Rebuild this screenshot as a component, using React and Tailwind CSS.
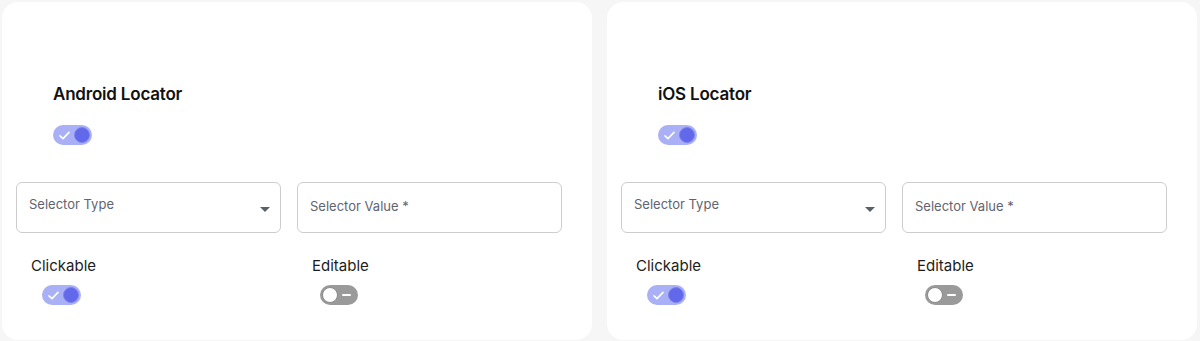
import React from "react";

function ToggleOn() {
  return (
    <div className="w-[39px] h-[20px] rounded-full bg-[#aab0f6] flex items-center justify-between pl-[6px] pr-[2px]">
      <svg width="11" height="9" viewBox="0 0 11 9" fill="none">
        <path d="M1 4.8 L4 7.6 L10 1.4" stroke="white" strokeWidth="1.6" strokeLinecap="round" strokeLinejoin="round" />
      </svg>
      <div className="w-[16px] h-[16px] rounded-full bg-[#6168ea] border border-[#7d83ee]" />
    </div>
  );
}

function ToggleOff() {
  return (
    <div className="w-[38px] h-[20px] rounded-full bg-[#9a9a9a] flex items-center justify-between pl-[2px] pr-[7px]">
      <div className="w-[16px] h-[16px] rounded-full bg-white border border-[#8a8a8a]" />
      <div className="w-[9px] h-[2px] bg-white rounded-full" />
    </div>
  );
}

function Card({ title }) {
  return (
    <div className="w-[590px] h-[338px] shrink-0 bg-white rounded-[16px] flex flex-col">
      <div className="pl-[51px] pt-[80px] flex flex-col">
        <div className="text-[17px] leading-[24px] font-semibold text-[#111111] tracking-[-0.2px]">{title}</div>
        <div className="mt-[19px]">
          <ToggleOn />
        </div>
      </div>
      <div className="mt-[37px] pl-[14px] flex gap-[16px]">
        <div className="w-[265px] h-[51px] rounded-[6px] border border-[#cdcdcd] relative">
          <div className="absolute left-[12px] top-[12px] text-[13px] leading-[18px] text-[#5f6470]">Selector Type</div>
          <svg className="absolute left-[243px] top-[24px]" width="10" height="5" viewBox="0 0 10 5">
            <path d="M0 0 L10 0 L5 5 Z" fill="#5b5f66" />
          </svg>
        </div>
        <div className="w-[265px] h-[51px] rounded-[6px] border border-[#cdcdcd] relative">
          <div className="absolute left-[12px] top-[14px] text-[13px] leading-[18px] text-[#5f6470]">Selector Value *</div>
        </div>
      </div>
      <div className="mt-[23px] flex pl-[29px]">
        <div className="w-[281px] flex flex-col">
          <div className="text-[15px] leading-[20px] text-[#1c1c1c]">Clickable</div>
          <div className="mt-[9px] pl-[11px]">
            <ToggleOn />
          </div>
        </div>
        <div className="flex flex-col">
          <div className="text-[15px] leading-[20px] text-[#1c1c1c]">Editable</div>
          <div className="mt-[9px] pl-[8px]">
            <ToggleOff />
          </div>
        </div>
      </div>
    </div>
  );
}

export default function App() {
  return (
    <div
      className="w-[1200px] h-[341px] overflow-hidden bg-[#f6f6f6] flex gap-[15px] pl-[2px] pt-[2px]"
      style={{ fontFamily: "Inter, 'Noto Sans', sans-serif" }}
    >
      <Card title="Android Locator" />
      <Card title="iOS Locator" />
    </div>
  );
}
